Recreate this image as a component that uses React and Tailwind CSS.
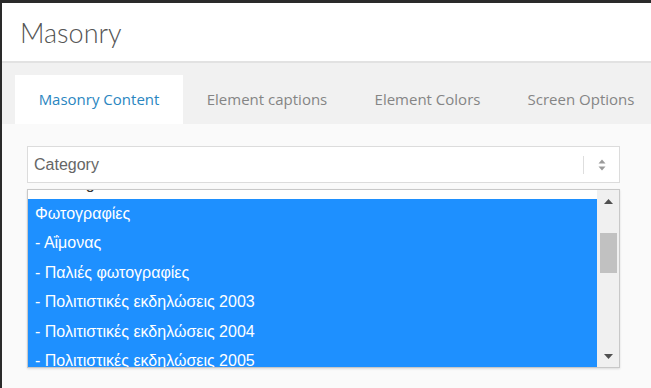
import React from 'react'

const rows = [
  'Φωτογραφίες',
  '- Αΐμονας',
  '- Παλιές φωτογραφίες',
  '- Πολιτιστικές εκδηλώσεις 2003',
  '- Πολιτιστικές εκδηλώσεις 2004',
  '- Πολιτιστικές εκδηλώσεις 2005',
]

function Tab({ label, active, width }) {
  return (
    <div
      className={
        'shrink-0 flex items-center justify-center text-[15px] ' +
        (active ? 'bg-white text-[#2a86bf]' : 'text-[#858585]')
      }
      style={{ width }}
    >
      {label}
    </div>
  )
}

export default function App() {
  return (
    <div className="w-[651px] h-[388px] overflow-hidden bg-[#2a2a2a] pt-[3px] pl-[2px] font-['Open_Sans',sans-serif]">
      <div className="h-full flex flex-col bg-[#fafafa]">
        {/* Header */}
        <div className="h-[60px] shrink-0 bg-white border-b-2 border-[#e2e2e2] flex items-center pl-[18px]">
          <h1 className="text-[27px] font-light text-[#555] font-['Lato',sans-serif] leading-none">Masonry</h1>
        </div>

        {/* Tabs */}
        <div className="h-[61px] shrink-0 bg-[#f1f1f1] pt-[12px] pl-[13px] flex overflow-hidden">
          <Tab label="Masonry Content" active width={168} />
          <Tab label="Element captions" width={168} />
          <Tab label="Element Colors" width={153} />
          <Tab label="Screen Options" width={154} />
        </div>

        {/* Content */}
        <div className="px-[25px] pt-[22px] font-['Liberation_Sans',Arial,sans-serif]">
          <div className="w-[593px] h-[37px] bg-white border border-[#dcdcdc] flex items-center">
            <span className="flex-1 pl-[6px] text-[16px] text-[#666]">Category</span>
            <div className="w-px h-[18px] bg-[#dedede]" />
            <div className="w-[35px] flex items-center justify-center">
              <svg width="8" height="12" viewBox="0 0 8 12">
                <path d="M4 0.5 L7.5 4.5 H0.5 Z" fill="#9a9a9a" />
                <path d="M4 11.5 L7.5 7.5 H0.5 Z" fill="#9a9a9a" />
              </svg>
            </div>
          </div>

          <div className="mt-[6px] w-[593px] h-[179px] bg-white border border-[#c8c8c8] shadow-[0_1px_2px_rgba(0,0,0,0.12)] flex overflow-hidden">
            <div className="flex-1 overflow-hidden">
              <div className="-mt-[20.5px] text-[16px]">
                <div className="h-[29.5px] flex items-center pl-[7px] text-[#333]">Uncategorized</div>
                {rows.map((r) => (
                  <div key={r} className="h-[29.5px] flex items-center pl-[7px] text-white bg-[#1e90ff]">
                    {r}
                  </div>
                ))}
              </div>
            </div>
            <div className="w-[22px] shrink-0 bg-[#f0f0f0] flex flex-col items-center">
              <div className="h-[21px] w-full flex items-center justify-center pt-[2px]">
                <svg width="9" height="5" viewBox="0 0 9 5">
                  <path d="M4.5 0 L9 5 H0 Z" fill="#505050" />
                </svg>
              </div>
              <div className="mt-[22px] w-[17px] h-[40px] bg-[#c1c1c1]" />
              <div className="flex-1" />
              <div className="h-[20px] w-full flex items-center justify-center pb-[2px]">
                <svg width="9" height="5" viewBox="0 0 9 5">
                  <path d="M0 0 H9 L4.5 5 Z" fill="#505050" />
                </svg>
              </div>
            </div>
          </div>
        </div>
      </div>
    </div>
  )
}
